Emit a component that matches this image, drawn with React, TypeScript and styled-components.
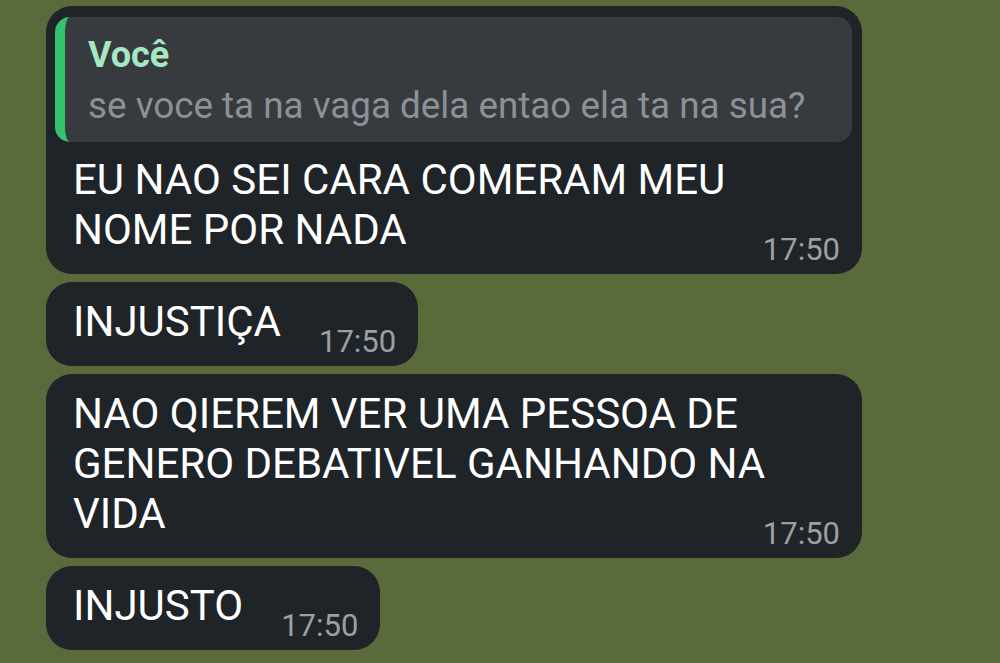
import React from "react";
import styled, { createGlobalStyle } from "styled-components";

const Global = createGlobalStyle`
  html, body {
    margin: 0;
    padding: 0;
    background: #5b6a3a;
  }
  body {
    font-family: Roboto, "Noto Sans", "Liberation Sans", sans-serif;
    -webkit-font-smoothing: antialiased;
  }
`;

const Chat = styled.div`
  width: 1000px;
  height: 663px;
  overflow: hidden;
  background: #5b6a3a;
  display: flex;
  flex-direction: column;
  align-items: flex-start;
  gap: 8px;
  padding: 6px 0 0 46px;
  box-sizing: border-box;
`;

const Bubble = styled.div`
  display: flow-root;
  box-sizing: border-box;
  max-width: 816px;
  background: #1f2428;
  border-radius: 26px;
  padding: 11px 10px 9px 9px;
`;

const Reply = styled.div`
  background: #373b3f;
  border-left: 10px solid #34c26e;
  border-radius: 15px;
  padding: 17px 20px 14px 23px;
  margin-bottom: 13px;
  width: 797px;
  box-sizing: border-box;
`;

const ReplyName = styled.div`
  color: #a7e8c3;
  font-size: 36px;
  font-weight: 700;
  line-height: 42px;
  margin-bottom: 8px;
`;

const ReplyText = styled.div`
  color: #8c9196;
  font-size: 36.8px;
  line-height: 44px;
  white-space: nowrap;
`;

const Body = styled.div<{ $top: number }>`
  display: flow-root;
  padding: ${(p) => p.$top}px 12px 0 18px;
  color: #ffffff;
  font-size: 42px;
  line-height: 50px;
`;

const Time = styled.span`
  float: right;
  margin: 30px 0 0 38px;
  font-size: 31px;
  line-height: 30px;
  color: #9aa0a5;
`;

type Msg = { text: string; time: string; reply?: { name: string; text: string } };

const messages: Msg[] = [
  {
    text: "EU NAO SEI CARA COMERAM MEU NOME POR NADA",
    time: "17:50",
    reply: { name: "Você", text: "se voce ta na vaga dela entao ela ta na sua?" },
  },
  { text: "INJUSTIÇA", time: "17:50" },
  { text: "NAO QIEREM VER UMA PESSOA DE GENERO DEBATIVEL GANHANDO NA VIDA", time: "17:50" },
  { text: "INJUSTO", time: "17:50" },
];

export default function App() {
  return (
    <>
      <Global />
      <Chat>
        {messages.map((m, i) => (
          <Bubble key={i}>
            {m.reply && (
              <Reply>
                <ReplyName>{m.reply.name}</ReplyName>
                <ReplyText>{m.reply.text}</ReplyText>
              </Reply>
            )}
            <Body $top={m.reply ? 0 : 4}>
              {m.text}
              <Time>{m.time}</Time>
            </Body>
          </Bubble>
        ))}
      </Chat>
    </>
  );
}
